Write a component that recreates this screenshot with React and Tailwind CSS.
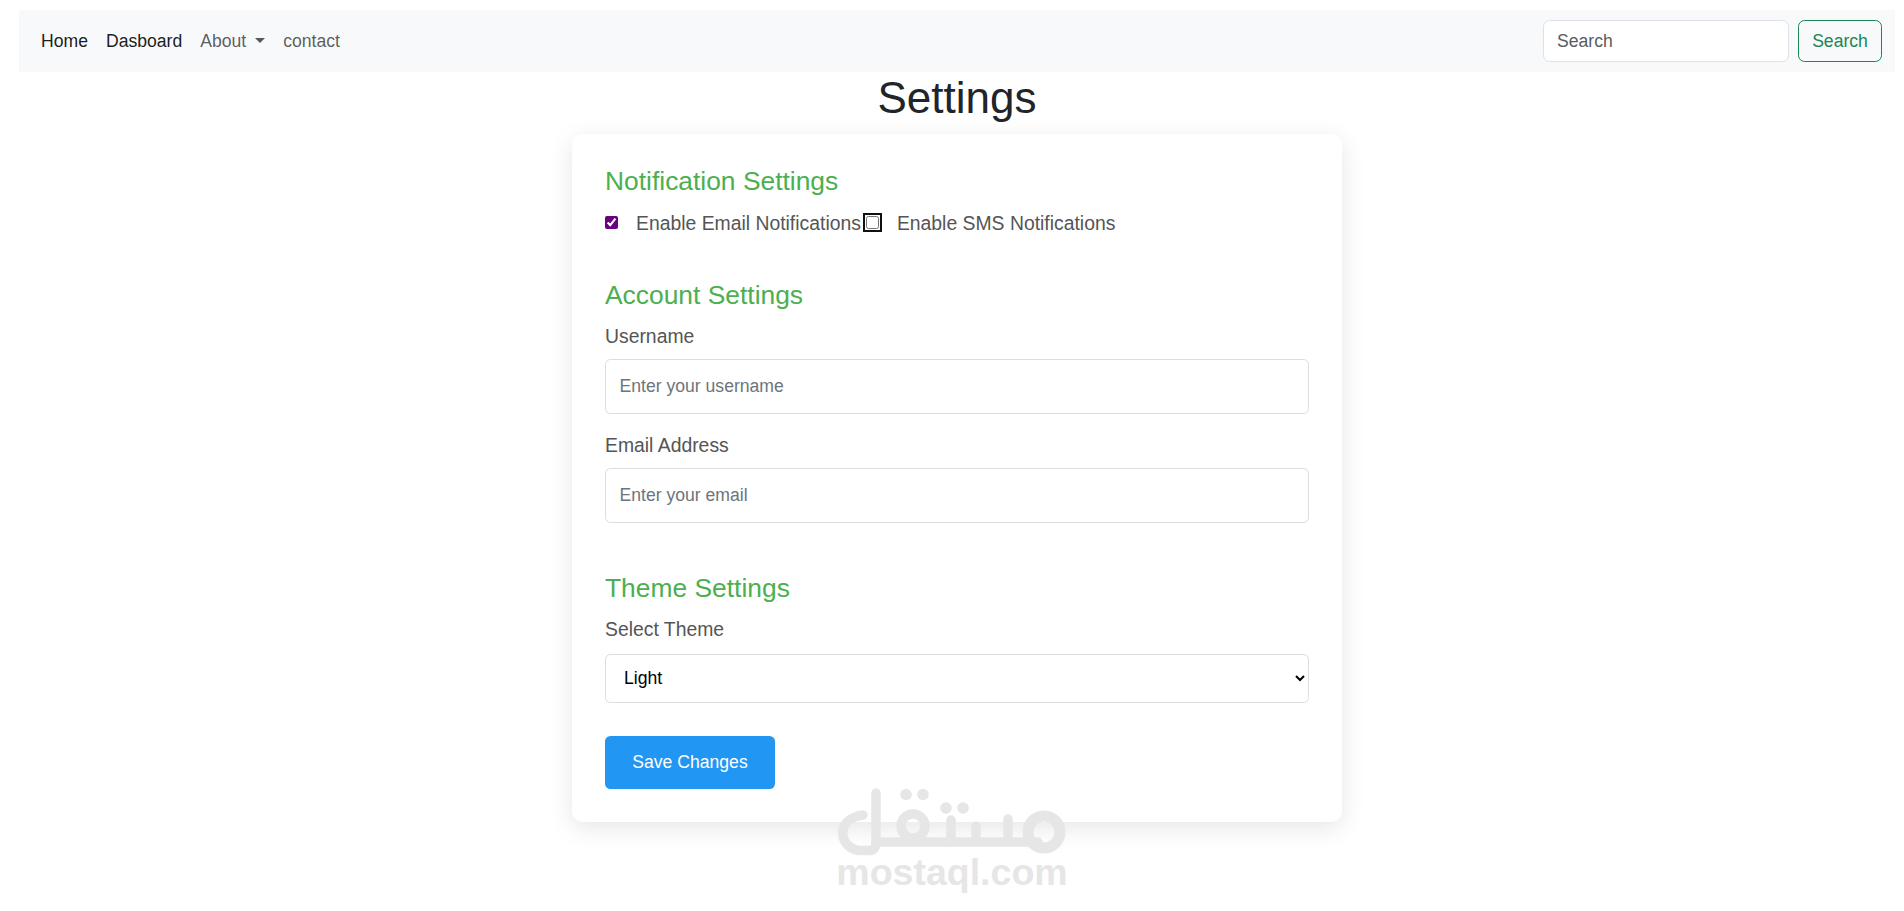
import React from 'react';

const Section = ({ className = '', children }) => (
  <h3 className={`text-[26.4px] leading-[1.2] text-[#4caf50] ${className}`}>{children}</h3>
);

const Field = ({ label, placeholder, type = 'text' }) => (
  <div className="mb-[17px]">
    <label className="block text-[19.36px] leading-[29px] text-[#555] mb-[8px]">{label}</label>
    <input
      type={type}
      placeholder={placeholder}
      className="block w-full h-[55px] px-[13.5px] text-[17.6px] bg-white border border-[#ddd] rounded-[5.5px] outline-none placeholder:text-[#6c757d]"
    />
  </div>
);

// mostaql watermark logo, drawn as strokes
const Watermark = () => (
  <div className="absolute left-[838px] top-[788px] w-[228px] flex flex-col items-center pointer-events-none select-none">
    <svg width="228" height="68" viewBox="0 0 228 68" fill="none" stroke="#e6e6e6" strokeWidth="9.5" strokeLinecap="round" strokeLinejoin="round">
      <path d="M25 27 C12 29 4.8 36 4.8 45 C4.8 55 13 62.5 23 62.5 H32 Q38 62.5 38 54 V5" />
      <path d="M38 54 H200" />
      <circle cx="75" cy="38" r="12" />
      <path d="M113 32 V54 M138 38 V54 M170 31 V54" />
      <circle cx="206" cy="44" r="16" strokeWidth="11" />
      <g fill="#e6e6e6" stroke="none">
        <circle cx="68" cy="6.5" r="5.8" />
        <circle cx="85" cy="6.5" r="5.8" />
        <circle cx="108" cy="20" r="5.8" />
        <circle cx="125" cy="20" r="5.8" />
      </g>
    </svg>
    <div className="text-[#e6e6e6] font-bold text-[37.5px] leading-none -mt-[2px]">mostaql.com</div>
  </div>
);

export default function App() {
  return (
    <div className="relative min-h-[911px] bg-white pt-[10px] pl-[19px] pr-[9px] font-['Liberation_Sans',Arial,sans-serif] text-[17.6px] overflow-hidden">
      <nav className="h-[62px] bg-[#f8f9fa] flex items-center justify-between pl-[13px] pr-[13px]">
        <ul className="flex items-center">
          <li className="px-[9px] text-black/90">Home</li>
          <li className="px-[9px] text-black/90">Dasboard</li>
          <li className="px-[9px] text-black/65 flex items-center">
            About
            <span className="ml-[9px] w-0 h-0 border-x-[5px] border-x-transparent border-t-[5px] border-t-[#595959]"></span>
          </li>
          <li className="px-[9px] text-black/65">contact</li>
        </ul>
        <form className="flex items-center gap-[9px]">
          <input
            placeholder="Search"
            className="w-[246px] h-[42px] px-[13px] bg-white border border-[#dee2e6] rounded-[6.6px] outline-none placeholder:text-[#595c5f]"
          />
          <button type="button" className="w-[84px] h-[42px] border border-[#198754] text-[#198754] rounded-[6.6px]">Search</button>
        </form>
      </nav>

      <h1 className="text-center text-[44px] leading-[1.2] text-[#212529] mb-[9px]">Settings</h1>

      <div className="w-[770px] mx-auto bg-white rounded-[11px] px-[33px] pt-[32px] pb-[33px] shadow-[0_6px_24px_rgba(0,0,0,0.1)]">
        <Section className="mb-[12px]">Notification Settings</Section>
        <div className="flex items-center h-[29px] text-[19.36px] text-[#555] mb-[42px]">
          <input type="checkbox" defaultChecked className="w-[13px] h-[13px] mb-[2px] accent-[#6a0080] mr-[18px]" />
          <span>Enable Email Notifications</span>
          <span className="ml-[5px] mr-[18px] w-[13px] h-[13px] mb-[2px] flex items-center justify-center">
            <input type="checkbox" className="w-[13px] h-[13px] outline-2 outline-offset-1 outline-[#101010] rounded-[2px]" />
          </span>
          <span>Enable SMS Notifications</span>
        </div>

        <Section className="mb-[10px]">Account Settings</Section>
        <Field label="Username" placeholder="Enter your username" />
        <Field label="Email Address" placeholder="Enter your email" type="email" />

        <Section className="mt-[50px] mb-[10px]">Theme Settings</Section>
        <div className="mb-[33px]">
          <label className="block text-[19.36px] leading-[29px] text-[#555] mb-[10px]">Select Theme</label>
          <select className="block w-full h-[49px] pl-[14px] pr-[2px] text-[17.6px] text-black bg-white border border-[#ddd] rounded-[5.5px] outline-none">
            <option>Light</option>
            <option>Dark</option>
          </select>
        </div>

        <button type="button" className="block w-[170px] h-[53px] bg-[#2196f3] text-white rounded-[5.5px]">Save Changes</button>
      </div>

      <Watermark />
    </div>
  );
}
